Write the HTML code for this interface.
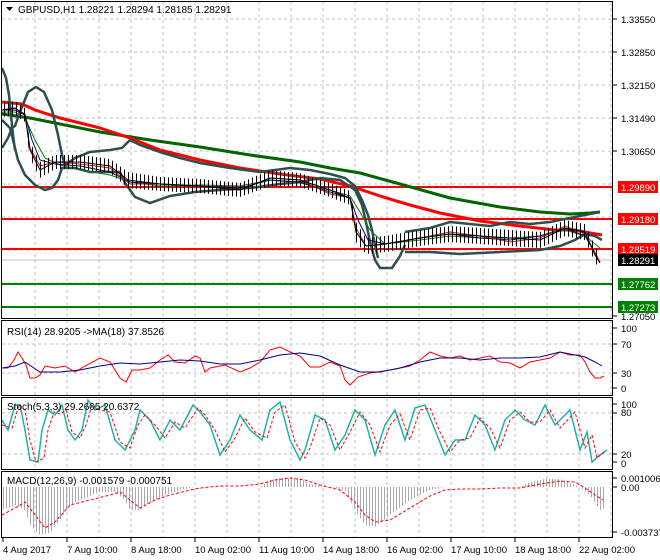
<!DOCTYPE html>
<html><head><meta charset="utf-8"><style>
html,body{margin:0;padding:0;background:#fff;}
svg{display:block;font-family:"Liberation Sans",sans-serif;}
</style></head><body>
<svg width="660" height="560" viewBox="0 0 660 560" xmlns="http://www.w3.org/2000/svg">
<defs>
<pattern id="vs" width="3" height="10" patternUnits="userSpaceOnUse"><rect x="0" y="0" width="1" height="10" fill="#a8a8a8"/></pattern>
<pattern id="pb" width="4" height="10" patternUnits="userSpaceOnUse"><rect x="0" y="0" width="1" height="10" fill="#000"/></pattern>
</defs>
<rect width="660" height="560" fill="#fff"/>
<g stroke="#c0c0c0" stroke-dasharray="3,3" stroke-width="1">
<path d="M35 2V537M67 2V537M99 2V537M131 2V537M163 2V537M195 2V537M227 2V537M259 2V537M291 2V537M323 2V537M355 2V537M387 2V537M419 2V537M451 2V537M483 2V537M515 2V537M547 2V537M579 2V537M611 2V537"/>
<path d="M2 19H612M2 52H612M2 85H612M2 118H612M2 151H612M2 184H612M2 217H612M2 250H612M2 283H612"/>
<path d="M2 344H612M2 373H612M2 413H612M2 454H612"/>
</g>
<g stroke-width="2">
<path d="M2 187H612" stroke="#ff0000"/>
<path d="M2 219H612" stroke="#ff0000"/>
<path d="M2 249H612" stroke="#ff0000"/>
<path d="M2 284H612" stroke="#008000"/>
<path d="M2 307H612" stroke="#008000"/>
</g>
<path d="M2 260H612" stroke="#c0c0c0" stroke-width="1"/>
<polyline fill="none" stroke="#006400" stroke-width="3" points="2,114 30,118 60,124 100,132 150,140 200,147 250,155 300,162 330,168 360,173 400,184 450,198 500,207 540,212 570,214 590,213 600,212"/>
<polyline fill="none" stroke="#ff0000" stroke-width="3" points="2,102 22,104 35,110 60,118 100,128 130,138 160,150 200,160 240,168 280,174 320,179 350,186 380,196 410,205 440,213 480,221 520,226 555,230 575,230 590,233 602,235"/>
<g fill="none" stroke="#2f4f4f" stroke-width="2.5">
<polyline points="2,68 6,78 9,95 11,115 13,135 15,150"/>
<polyline points="2,148 8,138 12,128 15,126 20,112 28,92 36,87 44,92 52,110 58,135 62,155 65,165 75,158 90,152 110,150 122,148 130,140 140,145 160,152 180,158 200,163 230,168 260,172 290,168 310,170 330,174 345,178 355,186 362,200 368,215 372,230 375,245 378,258"/>
<polyline points="2,120 10,128 18,160 25,175 35,185 45,190 52,188 58,180 62,168 75,168 90,172 120,172 125,183 135,197 150,203 170,196 195,192 220,190 250,188 280,184 300,182 320,178 340,180 355,190 362,205 366,222 370,242 375,260 380,268 392,268 400,256 405,245"/>
<polyline points="405,232 430,228 450,222 470,224 490,226 510,222 530,224 550,222 570,218 590,214 600,212"/>
<polyline points="405,252 430,252 460,254 500,252 540,250 560,246 575,240 585,234 595,236 602,240"/>
</g>
<polyline fill="none" stroke="#008000" stroke-width="1" points="2,112 15,112 25,118 35,140 45,158 60,165 80,170 110,175 130,182 160,186 200,185 240,186 270,180 300,183 330,190 350,196 360,212 370,230 385,244 420,240 450,236 480,238 510,238 540,236 565,230 585,236 600,248"/>
<polyline fill="none" stroke="#00008b" stroke-width="1" points="2,110 15,110 25,115 32,140 40,160 55,164 80,166 110,172 130,182 160,184 200,186 240,188 270,180 300,182 330,192 350,198 358,220 368,240 385,244 420,238 450,234 480,238 510,240 540,236 565,228 585,236 598,258"/>
<polyline fill="none" stroke="#ff0000" stroke-width="1" points="2,110 15,108 25,114 30,148 40,166 55,162 80,164 110,168 130,184 160,184 200,186 240,190 270,178 300,180 330,194 350,198 356,228 366,246 385,244 420,238 450,232 480,236 510,242 540,238 565,226 585,234 600,262"/>
<polygon fill="url(#pb)" points="2,103 15,101 25,108 30,142 40,162 55,155 80,155 110,159 128,172 160,177 200,179 240,183 270,170 300,173 330,183 350,191 356,222 366,238 385,236 420,230 450,226 480,228 510,230 540,232 565,220 585,224 595,246 600,255 600,270 595,262 585,240 565,236 540,248 510,246 480,244 450,242 420,246 385,252 366,254 356,242 350,205 330,197 300,187 270,186 240,197 200,193 160,191 128,188 110,173 80,169 55,169 40,178 30,158 25,122 15,115 2,117"/>
<polyline fill="none" stroke="#000" stroke-width="1" points="2,110 15,108 25,115 30,150 40,170 55,162 80,162 110,166 128,180 160,184 200,186 240,190 270,178 300,180 330,190 350,198 356,232 366,246 385,244 420,238 450,234 480,236 510,238 540,240 565,228 585,232 595,255 600,263"/>
<polyline fill="none" stroke="#ff0000" stroke-width="1" points="2,368 8,368 14,360 18,352 22,358 26,365 30,378 35,378 40,375 45,366 55,368 65,366 75,372 85,366 100,358 110,362 120,378 126,382 132,370 140,370 150,368 160,360 168,355 175,362 185,363 195,356 200,358 205,372 210,368 225,365 240,372 250,368 260,362 270,350 280,347 290,352 300,356 310,367 320,367 330,362 340,366 345,380 350,385 358,377 370,373 390,370 400,368 410,366 420,360 430,352 440,356 450,358 460,356 470,360 480,358 490,356 500,362 510,363 520,368 530,362 540,360 550,358 560,352 570,355 580,355 585,362 590,372 595,378 600,378 604,376"/>
<polyline fill="none" stroke="#00008b" stroke-width="1" points="2,368 15,366 25,362 40,372 60,372 80,370 100,366 120,363 140,364 160,362 180,360 200,361 220,364 240,364 260,360 280,355 300,353 320,356 340,365 360,372 380,372 400,368 420,362 440,358 460,358 480,360 500,358 520,358 540,357 560,352 575,355 585,357 595,362 602,366"/>
<polyline fill="none" stroke="#20b2aa" stroke-width="1.5" points="2,420 8,430 15,405 20,405 25,430 30,460 38,462 42,430 48,410 55,415 62,405 68,430 75,440 82,430 88,400 95,410 105,405 115,440 125,450 135,430 140,410 150,420 160,440 170,420 180,430 193,405 200,412 210,425 220,455 230,440 240,415 250,430 262,440 270,410 280,402 290,440 300,460 305,450 315,415 325,420 335,450 345,435 355,410 365,420 375,455 385,425 395,410 405,440 415,408 425,405 435,430 445,455 455,440 465,440 475,415 485,425 495,450 505,420 515,410 525,420 535,425 545,405 555,425 570,410 580,450 587,432 592,462 600,455 607,450"/>
<polyline fill="none" stroke="#ff0000" stroke-width="1" stroke-dasharray="3,2" points="2,425 12,428 19,405 25,410 30,440 36,462 44,458 48,430 54,412 60,414 66,410 72,432 80,438 86,425 92,405 100,410 110,412 120,442 130,448 138,425 145,415 155,425 165,438 175,422 185,428 198,408 205,415 215,430 225,452 235,438 245,418 255,432 267,438 275,412 285,405 295,442 305,458 310,448 320,418 330,425 340,450 350,432 360,412 370,425 380,452 390,425 400,414 410,440 420,410 430,408 440,432 450,452 460,440 470,438 480,418 490,428 500,448 510,420 520,412 530,422 540,422 550,410 560,428 575,412 585,448 592,435 597,458 604,452"/>
<polygon fill="url(#vs)" points="2,487 2,510 15,505 25,510 30,525 40,535 50,533 60,520 70,505 80,500 100,492 115,492 125,500 130,510 140,510 150,502 165,495 180,490 195,487 230,487 260,487 270,480 280,478 300,478 310,484 330,487 345,490 355,510 365,525 375,527 390,515 410,500 430,490 445,487 520,487 530,482 545,479 560,479 570,483 580,487 590,495 600,510 605,508 605,487"/>
<polyline fill="none" stroke="#ff0000" stroke-width="1" stroke-dasharray="3,2" points="2,515 15,508 25,502 35,515 45,528 55,522 70,505 90,500 110,495 120,492 130,500 140,508 155,500 170,495 190,490 200,488 220,486 240,486 260,484 275,480 290,478 305,480 320,485 340,490 355,502 365,515 375,522 390,520 410,508 430,496 445,490 460,489 480,489 500,488 520,488 540,484 560,481 575,482 585,488 595,495 603,500"/>
<g fill="none" stroke="#000" stroke-width="1">
<rect x="1.5" y="1.5" width="611" height="317"/>
<rect x="1.5" y="320.5" width="611" height="75"/>
<rect x="1.5" y="397.5" width="611" height="72"/>
<rect x="1.5" y="471.5" width="611" height="66"/>
</g>
<path d="M6 7h7l-3.5 4z" fill="#000"/>
<text x="18" y="13" font-size="10" fill="#000">GBPUSD,H1  1.28221 1.28294 1.28185 1.28291</text>
<text x="7" y="335" font-size="10" fill="#000">RSI(14) 28.9205  -&gt;MA(18) 37.8526</text>
<text x="7" y="410" font-size="10" fill="#000">Stoch(5,3,3) 29.2605 20.6372</text>
<text x="7" y="484" font-size="10" fill="#000">MACD(12,26,9) -0.001579 -0.000751</text>
<g font-size="9.5" fill="#000">
<text x="621" y="23">1.33550</text>
<text x="621" y="56">1.32850</text>
<text x="621" y="89">1.32150</text>
<text x="621" y="122">1.31490</text>
<text x="621" y="155">1.30650</text>
<text x="621" y="320">1.27050</text>
<text x="621" y="332">100</text>
<text x="621" y="348">70</text>
<text x="621" y="377">30</text>
<text x="621" y="392">0</text>
<text x="621" y="408">100</text>
<text x="621" y="416">80</text>
<text x="621" y="458">20</text>
<text x="621" y="467">0</text>
<text x="621" y="482">0.001006</text>
<text x="621" y="491">0.00</text>
<text x="621" y="536">-0.003737</text>
</g>
<g stroke="#000"><path d="M613 19h4M613 52h4M613 85h4M613 118h4M613 151h4M613 316h4M613 328h4M613 344h4M613 373h4M613 388h4M613 404h4M613 413h4M613 454h4M613 462h4M613 478h4M613 487h4M613 532h4"/></g>
<g font-size="9.5" fill="#fff">
<rect x="618" y="181" width="40" height="12" fill="#ff0000"/><text x="621" y="191">1.29890</text>
<rect x="618" y="213" width="40" height="12" fill="#ff0000"/><text x="621" y="223">1.29180</text>
<rect x="618" y="243" width="40" height="12" fill="#ff0000"/><text x="621" y="253">1.28519</text>
<rect x="618" y="254" width="40" height="12" fill="#000"/><text x="621" y="264">1.28291</text>
<rect x="618" y="278" width="40" height="12" fill="#008000"/><text x="621" y="288">1.27762</text>
<rect x="618" y="301" width="40" height="12" fill="#008000"/><text x="621" y="311">1.27273</text>
</g>
<g stroke="#000"><path d="M3 538v4M67 538v4M131 538v4M195 538v4M259 538v4M323 538v4M387 538v4M451 538v4M515 538v4M579 538v4"/></g>
<g font-size="9.5" fill="#000">
<text x="3" y="553">4 Aug 2017</text>
<text x="67" y="553">7 Aug 10:00</text>
<text x="131" y="553">8 Aug 18:00</text>
<text x="195" y="553">10 Aug 02:00</text>
<text x="259" y="553">11 Aug 10:00</text>
<text x="323" y="553">14 Aug 18:00</text>
<text x="387" y="553">16 Aug 02:00</text>
<text x="451" y="553">17 Aug 10:00</text>
<text x="515" y="553">18 Aug 18:00</text>
<text x="579" y="553">22 Aug 02:00</text>
</g>
</svg>
</body></html>
